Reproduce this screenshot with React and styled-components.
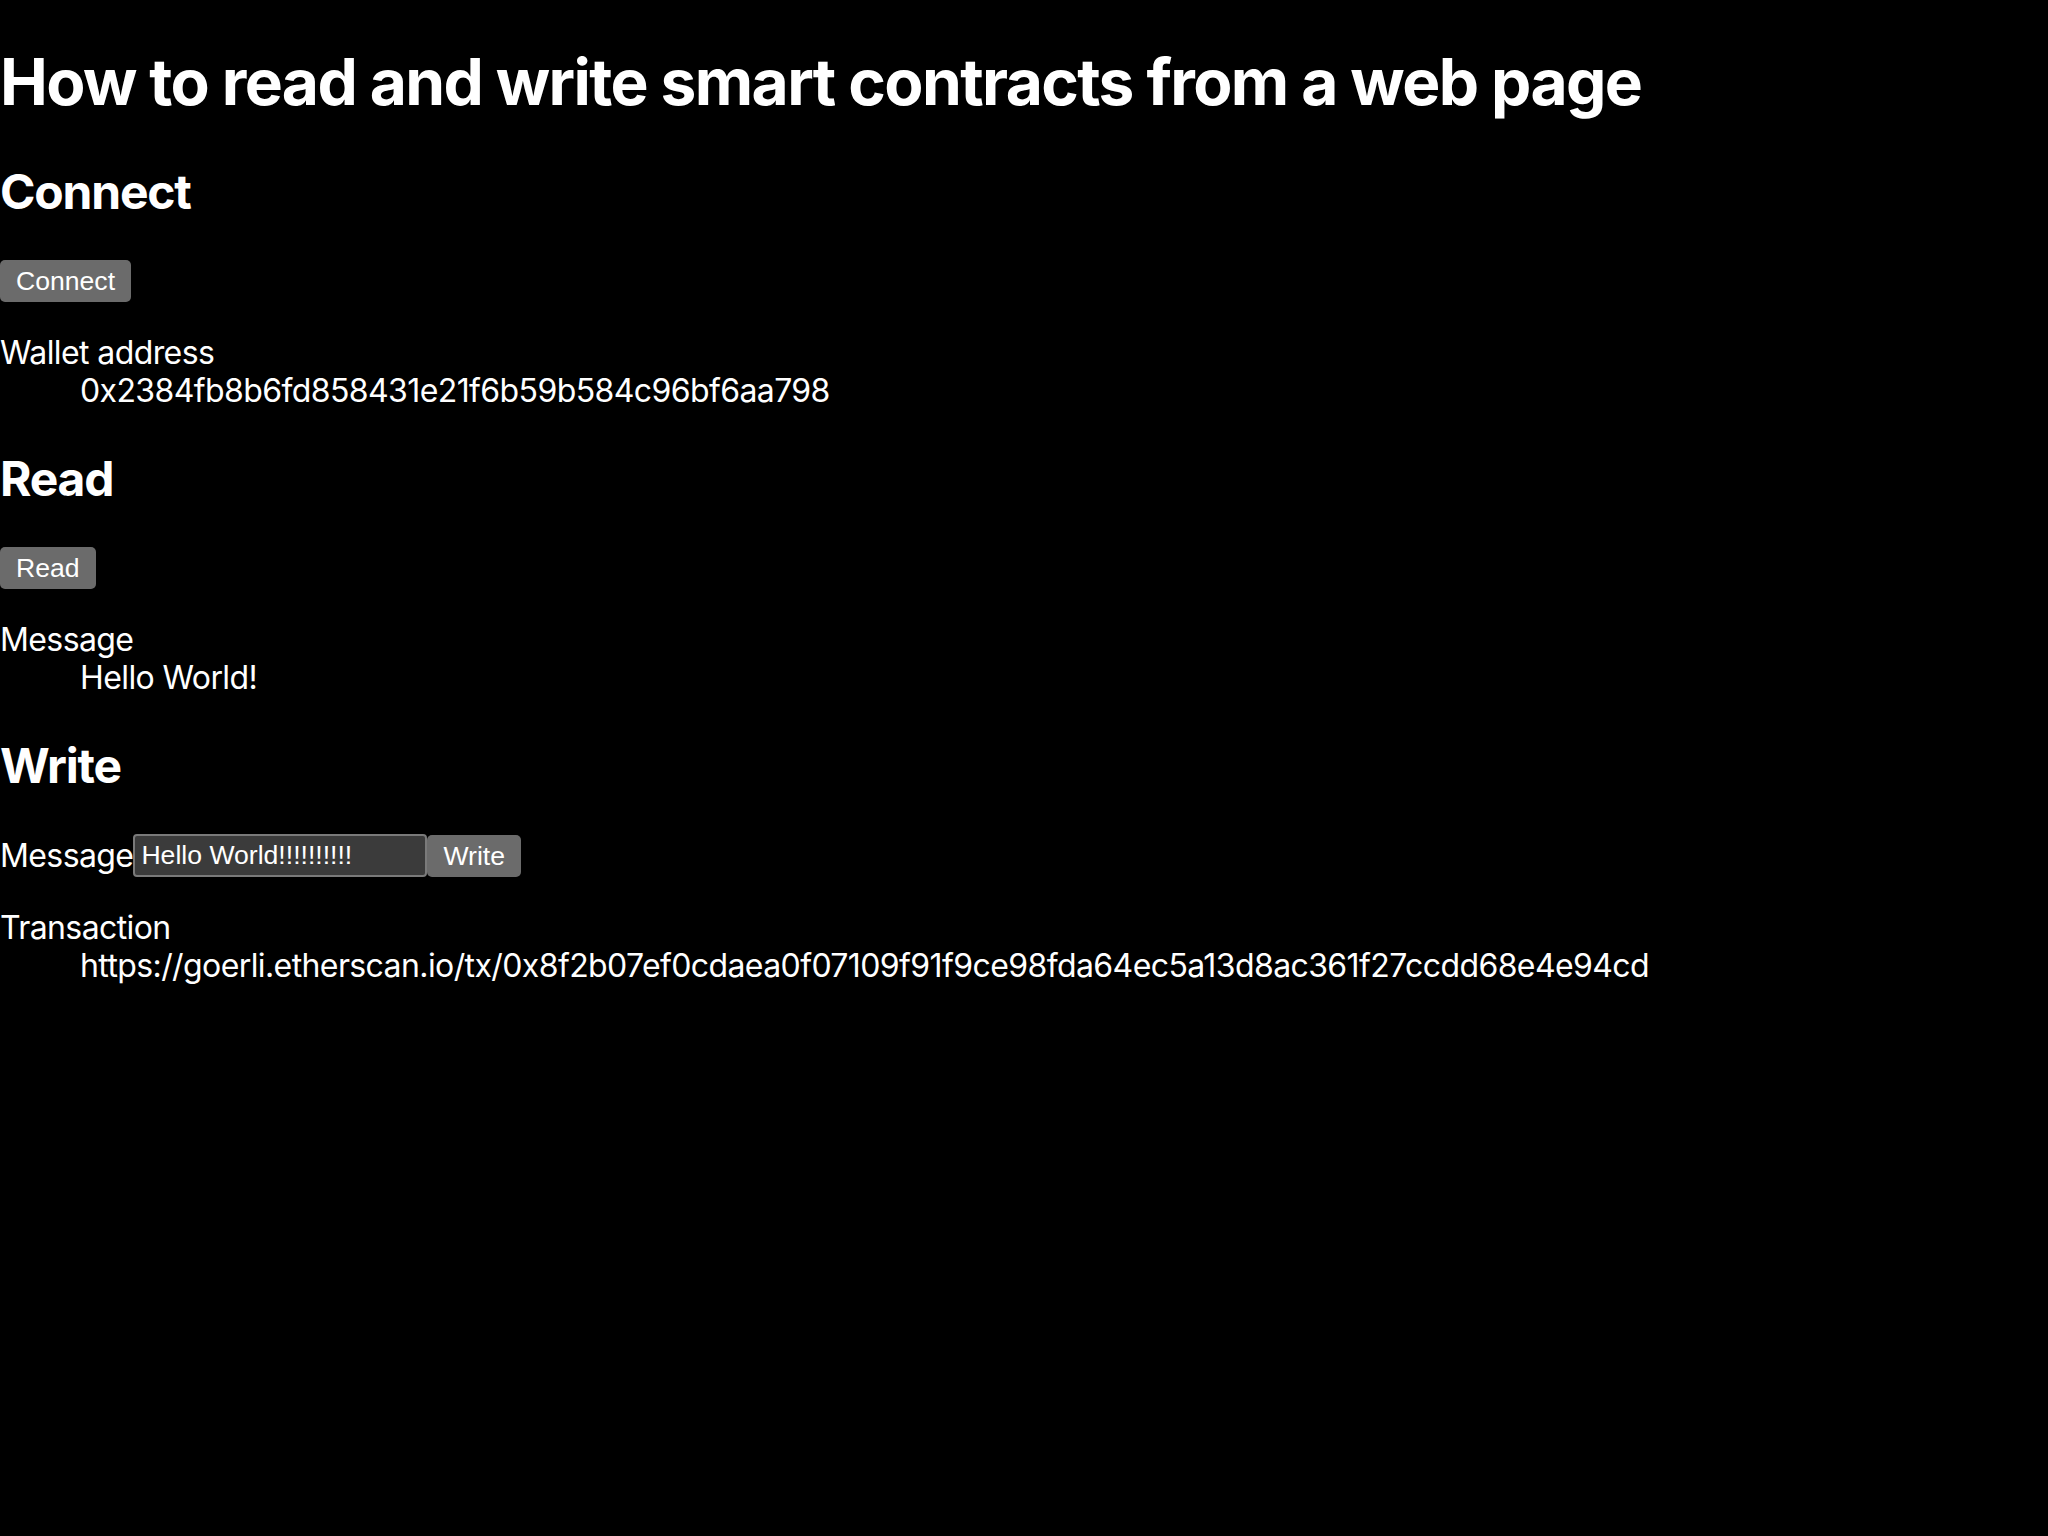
import styled, { createGlobalStyle } from 'styled-components';

const GlobalStyle = createGlobalStyle`
  html, body {
    margin: 0;
    background: #000;
    color: #fff;
    font-family: Inter, "Noto Sans", sans-serif;
    font-size: 32px;
    letter-spacing: -0.6px;
  }
`;

const Page = styled.main`
  display: flex;
  flex-direction: column;
`;

const Title = styled.h1`
  font-size: 64px;
  font-weight: 700;
  margin: 43px 0;
  line-height: 77px;
  letter-spacing: -1.6px;
`;

const Section = styled.section`
  display: flex;
  flex-direction: column;
  align-items: flex-start;
`;

const Heading = styled.h2`
  font-size: 48px;
  font-weight: 700;
  margin: 0 0 40px;
  line-height: 57px;
  letter-spacing: -1.2px;
`;

const Button = styled.button`
  font-family: "Liberation Sans", Arial, sans-serif;
  font-size: 26.6px;
  letter-spacing: 0;
  color: #fff;
  background: #6b6b6b;
  border: none;
  border-radius: 5px;
  padding: 0 16px;
  height: 42px;
  line-height: 42px;
`;

const Details = styled.dl`
  margin: 32px 0 40px;
  line-height: 38px;
`;

const Term = styled.dt``;

const Value = styled.dd`
  margin-left: 80px;
`;

const Row = styled.div`
  display: flex;
  align-items: center;
  line-height: 42px;
`;

const Field = styled.input`
  box-sizing: border-box;
  width: 294px;
  height: 43px;
  padding: 0 6px;
  font-family: "Liberation Sans", Arial, sans-serif;
  font-size: 26.6px;
  color: #fff;
  background: #3b3b3b;
  border: 2px solid #7a7a7a;
  border-radius: 4px;
  outline: none;
`;

const wallet = '0x2384fb8b6fd858431e21f6b59b584c96bf6aa798';
const tx = 'https://goerli.etherscan.io/tx/0x8f2b07ef0cdaea0f07109f91f9ce98fda64ec5a13d8ac361f27ccdd68e4e94cd';

export default function App() {
  return (
    <Page>
      <GlobalStyle />
      <Title>How to read and write smart contracts from a web page</Title>

      <Section>
        <Heading>Connect</Heading>
        <Button>Connect</Button>
        <Details>
          <Term>Wallet address</Term>
          <Value>{wallet}</Value>
        </Details>
      </Section>

      <Section>
        <Heading>Read</Heading>
        <Button>Read</Button>
        <Details>
          <Term>Message</Term>
          <Value>Hello World!</Value>
        </Details>
      </Section>

      <Section>
        <Heading>Write</Heading>
        <Row>
          <span>Message</span>
          <Field defaultValue="Hello World!!!!!!!!!!" />
          <Button>Write</Button>
        </Row>
        <Details>
          <Term>Transaction</Term>
          <Value>{tx}</Value>
        </Details>
      </Section>
    </Page>
  );
}
